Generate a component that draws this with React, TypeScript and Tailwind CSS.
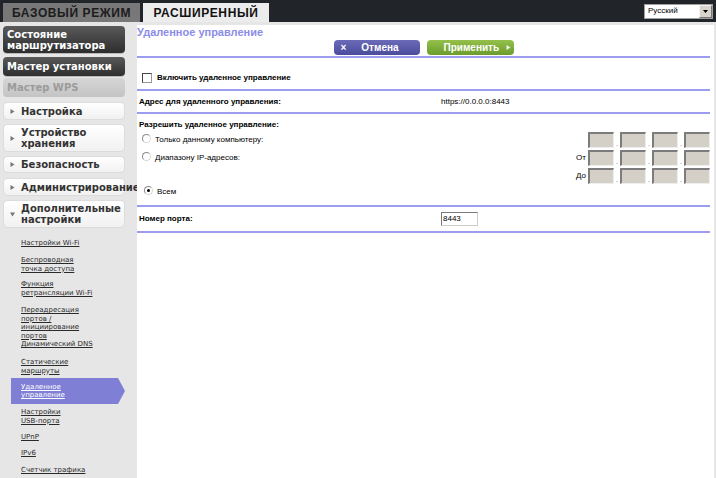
import React from 'react';

type MenuItem = {
  label: string[];
  kind: 'dark' | 'disabled' | 'light';
  mt: string;
  h: string;
  arrow?: 'right' | 'down';
};

const menu: MenuItem[] = [
  { label: ['Состояние', 'маршрутизатора'], kind: 'dark', mt: 'mt-[1px]', h: 'h-[27px]' },
  { label: ['Мастер установки'], kind: 'dark', mt: 'mt-[4px]', h: 'h-[19px]' },
  { label: ['Мастер WPS'], kind: 'disabled', mt: 'mt-[2px]', h: 'h-[19px]' },
  { label: ['Настройка'], kind: 'light', mt: 'mt-[5px]', h: 'h-[18px]', arrow: 'right' },
  { label: ['Устройство', 'хранения'], kind: 'light', mt: 'mt-[4px]', h: 'h-[28px]', arrow: 'right' },
  { label: ['Безопасность'], kind: 'light', mt: 'mt-[4px]', h: 'h-[17px]', arrow: 'right' },
  { label: ['Администрирование'], kind: 'light', mt: 'mt-[5px]', h: 'h-[18px]', arrow: 'right' },
  { label: ['Дополнительные', 'настройки'], kind: 'light', mt: 'mt-[4px]', h: 'h-[28px]', arrow: 'down' },
];

type SubItem = { lines: string[]; mt: string; active?: boolean };

const subMenu: SubItem[] = [
  { lines: ['Настройки Wi-Fi'], mt: 'mt-[11px]' },
  { lines: ['Беспроводная', 'точка доступа'], mt: 'mt-[8.5px]' },
  { lines: ['Функция', 'ретрансляции Wi-Fi'], mt: 'mt-[7px]' },
  { lines: ['Переадресация', 'портов /', 'инициирование', 'портов'], mt: 'mt-[9px]' },
  { lines: ['Динамический DNS'], mt: 'mt-0' },
  { lines: ['Статические', 'маршруты'], mt: 'mt-[9.5px]' },
  { lines: ['Удаленное', 'управление'], mt: 'mt-[3px]', active: true },
  { lines: ['Настройки', 'USB-порта'], mt: 'mt-[4px]' },
  { lines: ['UPnP'], mt: 'mt-[8px]' },
  { lines: ['IPv6'], mt: 'mt-[7.5px]' },
  { lines: ['Счетчик трафика'], mt: 'mt-[8.5px]' },
];

const Arrow = ({ dir }: { dir: 'right' | 'down' }) => (
  <svg width="5" height="5" viewBox="0 0 5 5" className="shrink-0">
    {dir === 'right' ? (
      <polygon points="0.5,0 4.5,2.5 0.5,5" fill="#777" />
    ) : (
      <polygon points="0,0.5 5,0.5 2.5,4.5" fill="#777" />
    )}
  </svg>
);

const Sidebar = () => (
  <aside className="w-[137px] shrink-0 bg-[#e6e6e6] font-['DejaVu_Sans',sans-serif] overflow-visible">
    {menu.map((m, i) => {
      const base = `${m.mt} ${m.h} ml-[3px] w-[122px] rounded-[4px] flex items-center font-bold text-[10px] leading-[11px] whitespace-nowrap`;
      if (m.kind === 'dark')
        return (
          <div key={i} className={`${base} pl-[4px] text-white bg-gradient-to-b from-[#5a5a5a] to-[#2e2e2e] shadow-[0_1px_0_#bbb]`}>
            <div>{m.label.map((l) => <div key={l}>{l}</div>)}</div>
          </div>
        );
      if (m.kind === 'disabled')
        return (
          <div key={i} className={`${base} pl-[4px] text-[#9b9b9b] bg-gradient-to-b from-[#d6d6d6] to-[#c4c4c4]`}>
            {m.label[0]}
          </div>
        );
      return (
        <div key={i} className={`${base} pl-[6px] gap-[6px] text-[#333] bg-gradient-to-b from-white to-[#f1f1f1] border border-[#dcdcdc]`}>
          <Arrow dir={m.arrow!} />
          <div>{m.label.map((l) => <div key={l}>{l}</div>)}</div>
        </div>
      );
    })}
    <div className="flex flex-col">
      {subMenu.map((s, i) =>
        s.active ? (
          <div
            key={i}
            className={`${s.mt} ml-[11px] w-[114px] h-[26px] flex items-center pl-[10px] bg-[#7f7fd6] [clip-path:polygon(0_0,calc(100%-7px)_0,100%_50%,calc(100%-7px)_100%,0_100%)]`}
          >
            <div className="text-[7px] leading-[8.5px] text-white underline">
              {s.lines.map((l) => <div key={l}>{l}</div>)}
            </div>
          </div>
        ) : (
          <div key={i} className={`${s.mt} pl-[21px] text-[7px] leading-[8.5px] text-[#2a2a2a] underline`}>
            {s.lines.map((l) => <div key={l}>{l}</div>)}
          </div>
        )
      )}
    </div>
  </aside>
);

const Line = () => <div className="h-[2px] bg-[#9c9cf0]" />;

const IpBox = () => (
  <div className="w-[26px] h-[16px] bg-[#d4d0c8] border-t-2 border-l-2 border-t-[#7c7c7c] border-l-[#7c7c7c] border-r border-b border-r-[#eeeeee] border-b-[#eeeeee]" />
);

const IpRow = ({ label }: { label?: string }) => (
  <div className="h-[16px] flex items-center justify-end">
    {label && <span className="mr-[2px] text-[8px]">{label}</span>}
    {[0, 1, 2, 3].map((n) => (
      <React.Fragment key={n}>
        {n > 0 && <span className="w-[6px] self-end text-center text-[7px] leading-[8px] text-[#555]">.</span>}
        <IpBox />
      </React.Fragment>
    ))}
  </div>
);

const Radio = ({ checked }: { checked?: boolean }) => (
  <span className="w-[9px] h-[9px] -mt-[3px] rounded-full border border-[#8a8a8a] border-r-[#d8d8d8] border-b-[#d8d8d8] bg-white flex items-center justify-center shrink-0">
    {checked && <span className="w-[3px] h-[3px] rounded-full bg-black" />}
  </span>
);

const Main = () => (
  <main className="flex-1 mr-[2px] pr-[4px] bg-white font-['Liberation_Sans',Arial,sans-serif] text-[8px] text-black">
    <div className="h-[15px] leading-[15px] text-[11px] font-bold text-[#8c8ce8]">Удаленное управление</div>
    <div className="h-[16px] flex justify-center gap-[7px]">
      <button className="w-[86px] h-[15px] rounded-[4px] bg-gradient-to-b from-[#6a6ab8] to-[#4c4c9c] text-white text-[10px] font-bold flex items-center pl-[7px]">
        <span className="text-[10px] leading-none">×</span>
        <span className="ml-[15px]">Отмена</span>
      </button>
      <button className="w-[87px] h-[15px] rounded-[4px] bg-gradient-to-b from-[#94c04a] to-[#6c9c2c] text-white text-[10px] font-bold flex items-center pl-[17px]">
        <span>Применить</span>
        <svg width="5" height="5" viewBox="0 0 5 5" className="ml-[7px]">
          <polygon points="0.5,0 4.5,2.5 0.5,5" fill="#f4f4f4" />
        </svg>
      </button>
    </div>
    <Line />
    <div className="h-[31px] pt-[15px] pl-[5px] flex items-start gap-[5px]">
      <span className="w-[10px] h-[10px] border border-[#444] border-r-[#999] border-b-[#999] bg-white shrink-0" />
      <span className="font-bold leading-[10px]">Включить удаленное управление</span>
    </div>
    <Line />
    <div className="h-[21px] pl-[2px] grid grid-cols-[302px_1fr] items-center">
      <span className="font-bold">Адрес для удаленного управления:</span>
      <span>https://0.0.0.0:8443</span>
    </div>
    <Line />
    <div className="pt-[6px] pb-[5px] pl-[2px]">
      <div className="h-[10px] leading-[10px] font-bold">Разрешить удаленное управление:</div>
      <div className="mt-[2px] flex">
        <div className="flex flex-col gap-[2px] pl-[3px]">
          <div className="h-[16px] flex items-center gap-[4px]">
            <Radio />
            <span>Только данному компьютеру:</span>
          </div>
          <div className="h-[16px] flex items-center gap-[4px]">
            <Radio />
            <span>Диапазону IP-адресов:</span>
          </div>
          <div className="mt-[16px] h-[16px] flex items-center gap-[4px] pl-[2px]">
            <Radio checked />
            <span>Всем</span>
          </div>
        </div>
        <div className="ml-auto flex flex-col gap-[2px]">
          <IpRow />
          <IpRow label="От" />
          <IpRow label="До" />
        </div>
      </div>
    </div>
    <Line />
    <div className="h-[24px] pl-[2px] grid grid-cols-[302px_1fr] items-center">
      <span className="font-bold">Номер порта:</span>
      <div className="w-[37px] h-[14px] border border-[#7a7a7a] border-r-[#ccc] border-b-[#ccc] bg-white pl-[1px] leading-[12px]">8443</div>
    </div>
    <Line />
  </main>
);

export default function App() {
  return (
    <div className="w-[716px] h-[478px] overflow-hidden flex flex-col bg-[#e6e6e6]">
      <header className="h-[22px] shrink-0 bg-[#212428] flex items-end pl-[3px] font-['Liberation_Sans',Arial,sans-serif]">
        <div className="w-[137px] h-[19px] bg-[#787878] text-[#1c1c1c] text-[12px] font-bold tracking-[0.6px] flex items-center justify-center">
          БАЗОВЫЙ РЕЖИМ
        </div>
        <div className="ml-[3px] w-[126px] h-[19px] bg-[#ececec] text-[#111] text-[12px] font-bold tracking-[0.6px] flex items-center justify-center">
          РАСШИРЕННЫЙ
        </div>
        <div className="ml-auto mr-[3px] self-center w-[69px] h-[15px] bg-white border border-[#a0a0a0] flex items-center">
          <span className="flex-1 pl-[3px] text-[8px] text-black">Русский</span>
          <span className="w-[13px] h-[13px] bg-[#d8d4cc] border border-[#f4f4f4] border-r-[#777] border-b-[#777] flex items-center justify-center">
            <svg width="5" height="3" viewBox="0 0 5 3">
              <polygon points="0,0 5,0 2.5,3" fill="#000" />
            </svg>
          </span>
        </div>
      </header>
      <div className="flex-1 flex pt-[3px] min-h-0">
        <Sidebar />
        <Main />
      </div>
    </div>
  );
}
